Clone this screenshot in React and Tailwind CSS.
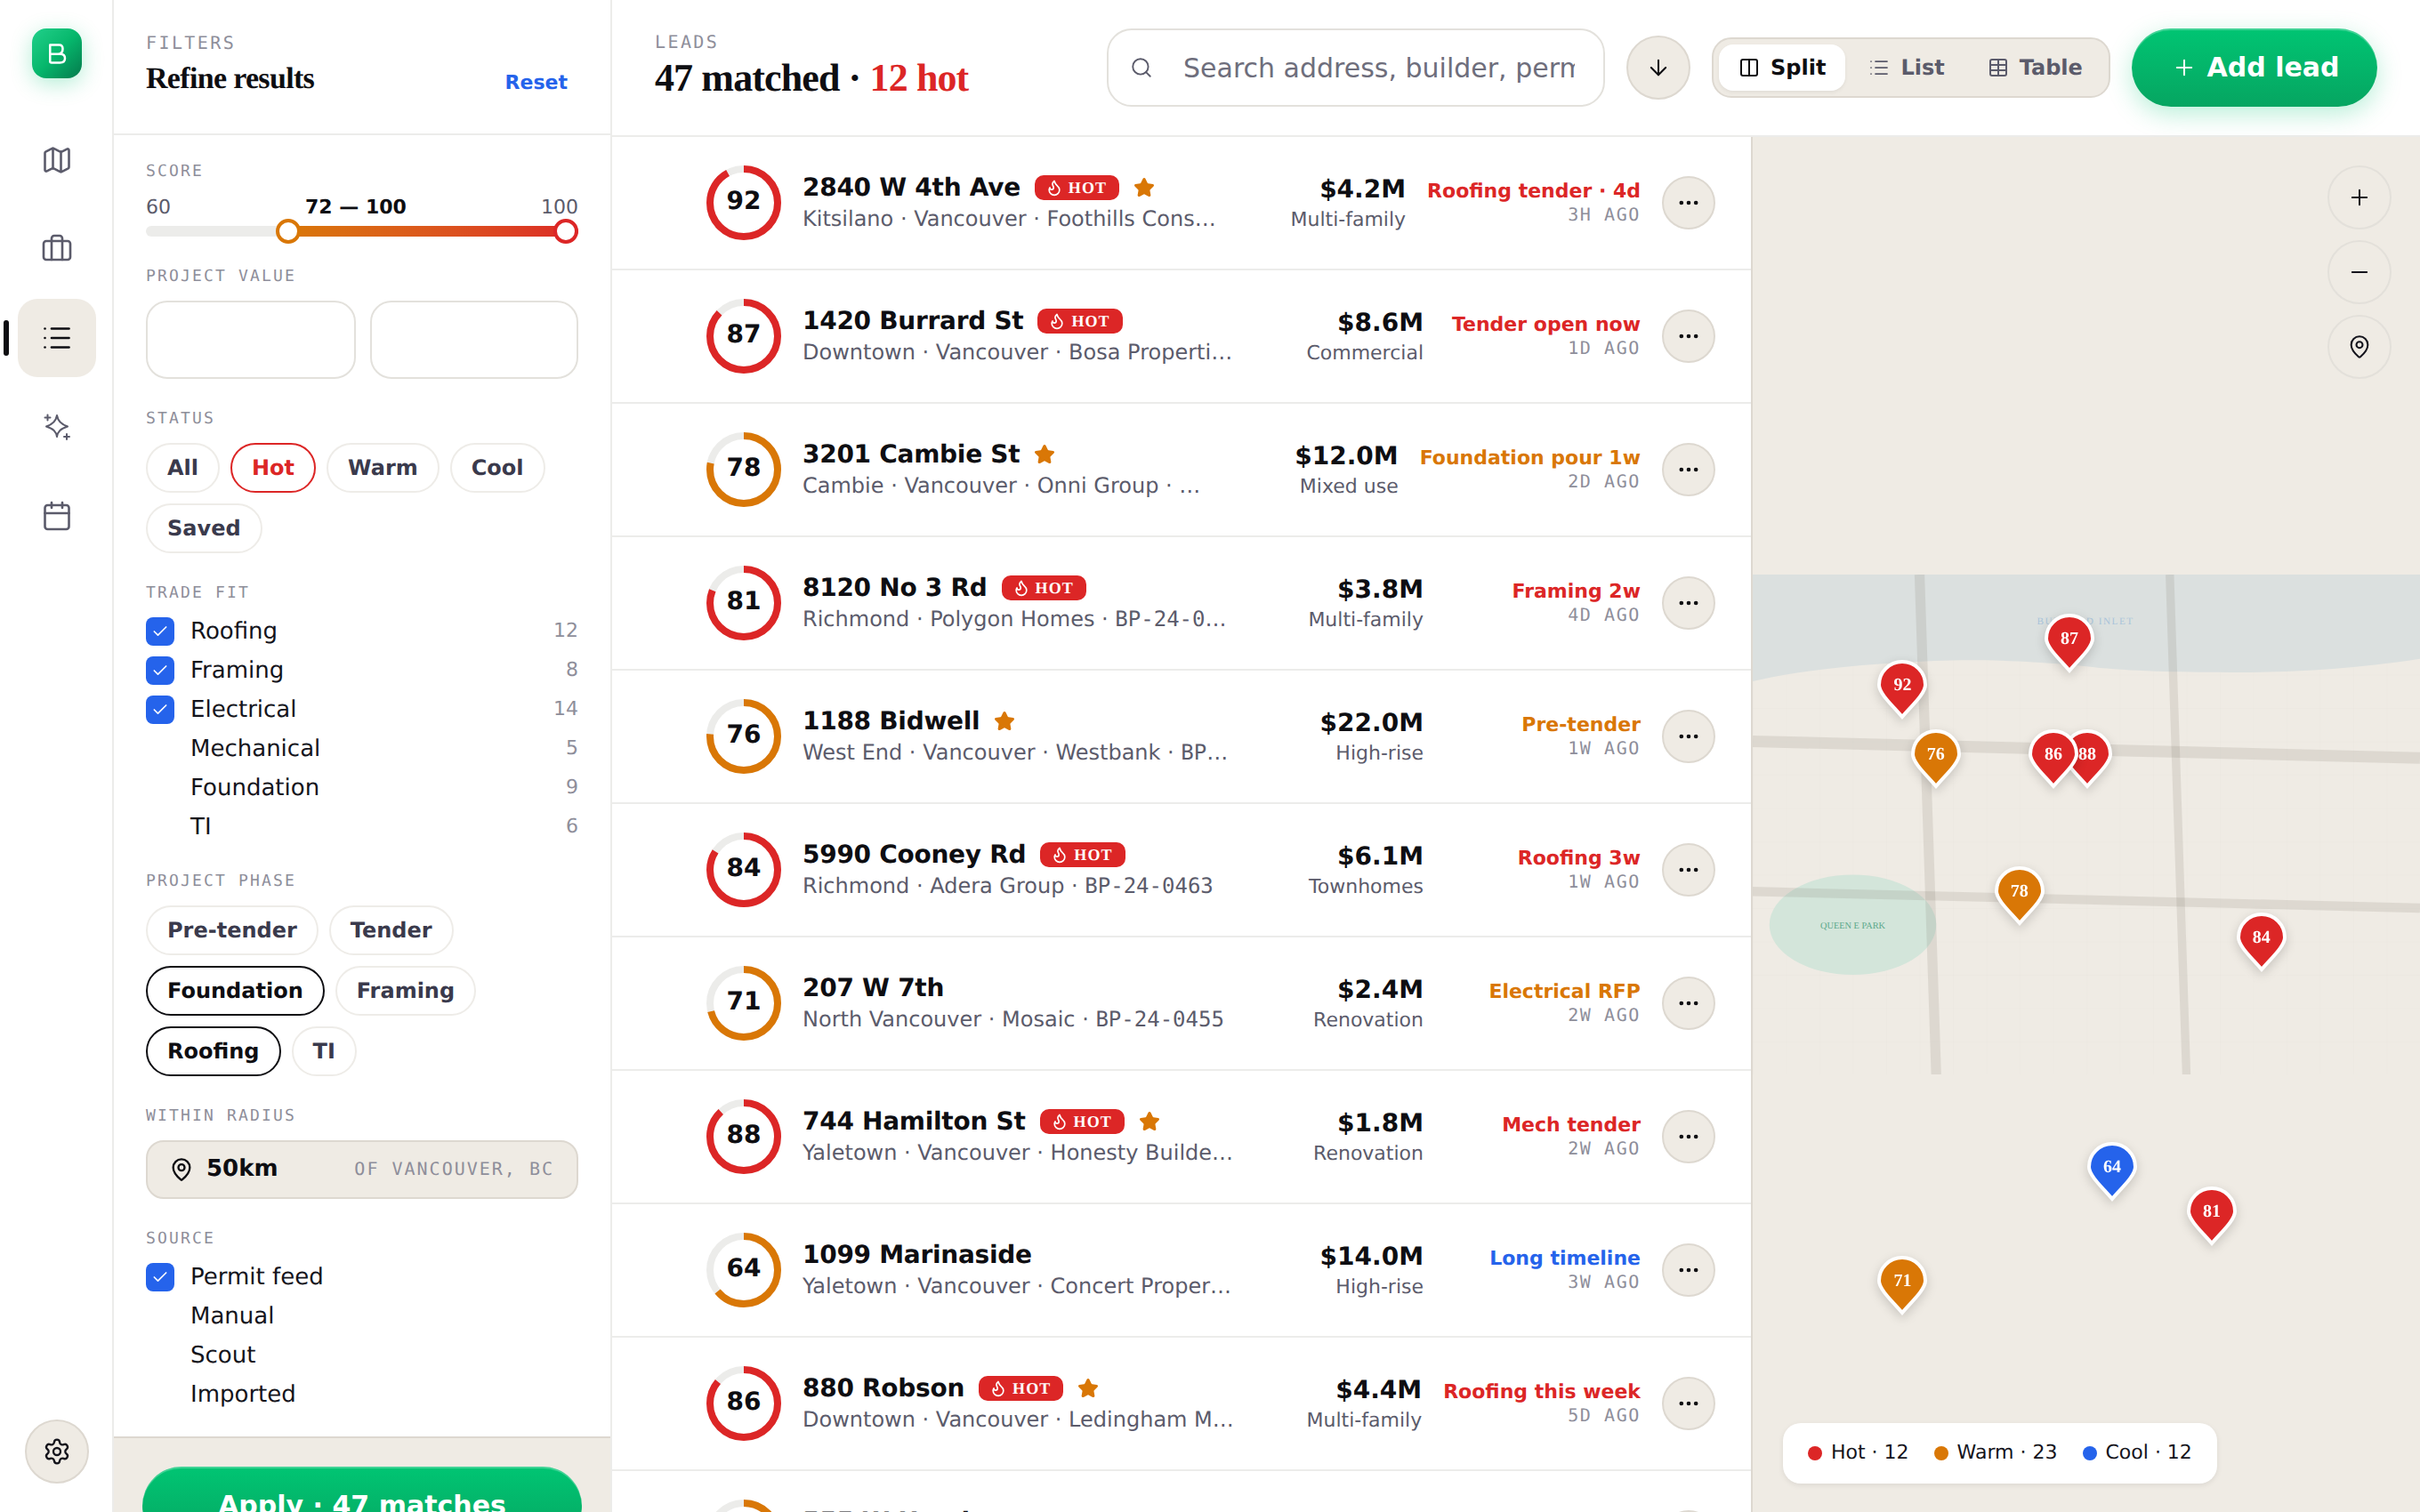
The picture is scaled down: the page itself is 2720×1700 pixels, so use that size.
import React from "react";
import { Map as MapIcon, Briefcase, List, Calendar, Settings, MapPin, Check, Search, ArrowDown, Columns2, Table, Plus, Minus, Ellipsis, Flame, Star } from "lucide-react";

const LABEL = "h-6 pt-[1px] font-['DejaVu_Sans_Mono',monospace] text-[18px] leading-6 tracking-[0.12em] text-[#8e8e9a] uppercase";

const leads = [
  { s: 92, t: "2840 W 4th Ave", hot: true, star: true, sub: "Kitsilano · Vancouver · Foothills Construction · ", bp: "BP-24-0412", p: "$4.2M", k: "Multi-family", sig: "Roofing tender · 4d", c: "text-[#dc2626]", ago: "3H AGO" },
  { s: 87, t: "1420 Burrard St", hot: true, sub: "Downtown · Vancouver · Bosa Properties · ", bp: "BP-24-0398", p: "$8.6M", k: "Commercial", sig: "Tender open now", c: "text-[#dc2626]", ago: "1D AGO" },
  { s: 78, t: "3201 Cambie St", star: true, sub: "Cambie · Vancouver · Onni Group · ", bp: "BP-24-0387", p: "$12.0M", k: "Mixed use", sig: "Foundation pour 1w", c: "text-[#d97706]", ago: "2D AGO" },
  { s: 81, t: "8120 No 3 Rd", hot: true, sub: "Richmond · Polygon Homes · ", bp: "BP-24-0476", p: "$3.8M", k: "Multi-family", sig: "Framing 2w", c: "text-[#dc2626]", ago: "4D AGO" },
  { s: 76, t: "1188 Bidwell", star: true, sub: "West End · Vancouver · Westbank · ", bp: "BP-24-0471", p: "$22.0M", k: "High-rise", sig: "Pre-tender", c: "text-[#d97706]", ago: "1W AGO" },
  { s: 84, t: "5990 Cooney Rd", hot: true, sub: "Richmond · Adera Group · ", bp: "BP-24-0463", p: "$6.1M", k: "Townhomes", sig: "Roofing 3w", c: "text-[#dc2626]", ago: "1W AGO" },
  { s: 71, t: "207 W 7th", sub: "North Vancouver · Mosaic · ", bp: "BP-24-0455", p: "$2.4M", k: "Renovation", sig: "Electrical RFP", c: "text-[#d97706]", ago: "2W AGO" },
  { s: 88, t: "744 Hamilton St", hot: true, star: true, sub: "Yaletown · Vancouver · Honesty Builders · ", bp: "BP-24-0449", p: "$1.8M", k: "Renovation", sig: "Mech tender", c: "text-[#dc2626]", ago: "2W AGO" },
  { s: 64, t: "1099 Marinaside", sub: "Yaletown · Vancouver · Concert Properties · ", bp: "BP-24-0441", p: "$14.0M", k: "High-rise", sig: "Long timeline", c: "text-[#2563eb]", ago: "3W AGO" },
  { s: 86, t: "880 Robson", hot: true, star: true, sub: "Downtown · Vancouver · Ledingham McAllister · ", bp: "BP-24-0436", p: "$4.4M", k: "Multi-family", sig: "Roofing this week", c: "text-[#dc2626]", ago: "5D AGO" },
  { s: 73, t: "555 W Hastings", sub: "Downtown · Vancouver · Westbank · ", bp: "BP-24-0428", p: "$9.2M", k: "Commercial", sig: "Pre-tender", c: "text-[#d97706]", ago: "1M AGO" },
];

const pins = [
  { n: 92, x: 168.4, y: 588, c: "#dc2626" },
  { n: 87, x: 356, y: 536, c: "#dc2626" },
  { n: 78, x: 299.7, y: 820, c: "#d97706" },
  { n: 81, x: 516, y: 1180, c: "#dc2626" },
  { n: 76, x: 205.7, y: 666, c: "#d97706" },
  { n: 84, x: 571.7, y: 872, c: "#dc2626" },
  { n: 71, x: 168.4, y: 1258, c: "#d97706" },
  { n: 88, x: 376, y: 666, c: "#dc2626" },
  { n: 64, x: 404, y: 1130, c: "#2563eb" },
  { n: 86, x: 338, y: 666, c: "#dc2626" },
];

function Label({ children, className = "" }) {
  return <div className={`${LABEL} ${className}`}>{children}</div>;
}

function Chip({ children, tone }) {
  const cls =
    tone === "hot"
      ? "border-[#dc2626] text-[#dc2626]"
      : tone === "on"
      ? "border-[#0e0e12] text-[#0e0e12]"
      : "border-[#eeece8] text-[#3a3a4c]";
  return (
    <span className={`flex h-14 items-center rounded-full border-2 bg-white px-[22px] text-[24px] leading-none font-bold ${cls}`}>
      {children}
    </span>
  );
}

function CheckRow({ on, label, count }) {
  return (
    <div className="flex h-11 items-center">
      <span className={`mr-[18px] flex h-8 w-8 shrink-0 items-center justify-center rounded-lg ${on ? "bg-[#2563eb]" : ""}`}>
        {on && <Check size={20} strokeWidth={2} className="text-white" />}
      </span>
      <span className="flex-1 text-[26px] leading-none text-[#14141c]">{label}</span>
      {count != null && <span className="text-[22px] leading-none text-[#8e8e9a]">{count}</span>}
    </div>
  );
}

function Ring({ score }) {
  const color = score >= 80 ? "#dc2626" : "#d97706";
  const r = 38;
  const c = 2 * Math.PI * r;
  return (
    <div className="relative h-[84px] w-[84px] shrink-0">
      <svg width="84" height="84" viewBox="0 0 84 84" className="-rotate-90">
        <circle cx="42" cy="42" r={r} fill="none" stroke="#ececea" strokeWidth="8" />
        <circle cx="42" cy="42" r={r} fill="none" stroke={color} strokeWidth="8" strokeDasharray={`${(c * score) / 100} ${c}`} />
      </svg>
      <div className="absolute inset-0 flex items-center justify-center pb-1 text-[28px] leading-none font-bold text-[#0e0e12]">{score}</div>
    </div>
  );
}

function Row({ l }) {
  return (
    <div className="flex h-[150px] shrink-0 items-center gap-6 border-b-2 border-[#ececea] pr-10 pl-[106px]">
      <Ring score={l.s} />
      <div className="min-w-0 flex-1 pb-[1px]">
        <div className="flex h-9 items-center gap-4">
          <span className="text-[28px] leading-9 font-bold tracking-[-0.01em] whitespace-nowrap text-[#0e0e12]">{l.t}</span>
          {l.hot && (
            <span className="flex h-7 items-center gap-[6px] rounded-[10px] bg-[#dc2626] pr-[14px] pl-3 font-['Liberation_Serif',serif] text-[18px] leading-none font-bold tracking-[0.06em] text-white">
              <Flame size={20} strokeWidth={2} />
              HOT
            </span>
          )}
          {l.star && <Star size={24} className="fill-[#d97706] text-[#d97706]" />}
        </div>
        <div className="mt-[1px] truncate text-[24px] leading-8 text-[#5b5b6b]">
          {l.sub}
          <span className="font-['DejaVu_Sans_Mono',monospace]">{l.bp}</span>
        </div>
      </div>
      <div className="min-w-[186px] shrink-0 text-right">
        <div className="text-[28px] leading-9 font-bold text-[#0e0e12]">{l.p}</div>
        <div className="mt-[3px] text-[22px] leading-7 text-[#5b5b6b]">{l.k}</div>
      </div>
      <div className="min-w-[220px] shrink-0 pb-[2px] text-right">
        <div className={`text-[22px] leading-7 font-bold ${l.c}`}>{l.sig}</div>
        <div className="mt-[-1px] font-['DejaVu_Sans_Mono',monospace] text-[20px] leading-6 tracking-[0.08em] text-[#8e8e9a]">{l.ago}</div>
      </div>
      <button className="flex h-[60px] w-[60px] shrink-0 items-center justify-center rounded-full border-2 border-[#ddd8d0] bg-[#efebe4] text-[#0e0e12]">
        <Ellipsis size={28} strokeWidth={2} />
      </button>
    </div>
  );
}

function Pin({ p }) {
  return (
    <div className="absolute h-[68px] w-14 drop-shadow-[0_4px_6px_rgba(0,0,0,0.16)]" style={{ left: p.x - 28, top: p.y }}>
      <svg width="56" height="68" viewBox="0 0 56 68">
        <path d="M28 2C42.4 2 54 13.6 54 28C54 38 38 52 28 64C18 52 2 38 2 28C2 13.6 13.6 2 28 2Z" fill={p.c} stroke="#fff" strokeWidth="4" />
      </svg>
      <div className="absolute inset-x-0 top-0 flex h-14 items-center justify-center font-['Liberation_Serif',serif] text-[20px] leading-none font-bold text-white">{p.n}</div>
    </div>
  );
}

function MapRound({ children }) {
  return (
    <button className="flex h-[72px] w-[72px] items-center justify-center rounded-full border-2 border-[#e3e0da] bg-[#efebe4] text-[#14141c]">{children}</button>
  );
}

function SparkIcon() {
  return (
    <svg width="40" height="40" viewBox="0 0 40 40" fill="none" stroke="currentColor" strokeWidth="2" strokeLinecap="round" strokeLinejoin="round">
      <path d="M20 7C21 13 24 17 32 19.5C24 22 21 25 20 31C19 25 16 22 8 19.5C16 17 19 13 20 7Z" />
      <path d="M9.5 6.5V12.5M6.5 9.5H12.5M31 28V34M28 31H34" />
    </svg>
  );
}

function Rail() {
  const items = [MapIcon, Briefcase, List, SparkIcon, Calendar];
  return (
    <aside className="flex h-full w-32 shrink-0 flex-col items-center border-r-2 border-[#ececea] bg-white pl-[2px]">
      <div className="mt-8 mb-12 flex h-14 w-14 items-center justify-center rounded-[16px] bg-gradient-to-br from-[#1fd08a] via-[#06b76c] to-[#047a4c] shadow-[0_6px_24px_rgba(0,197,115,0.3)]">
        <svg width="24" height="28" viewBox="0 0 24 28" fill="none" stroke="#fff" strokeWidth="2.5" strokeLinecap="round" strokeLinejoin="round">
          <path d="M13 14.7H4.25M4.25 4.5H14.5Q18.5 4.5 18.5 9Q18.5 14.7 13 14.7H16Q21 14.7 21 19.5Q21 24.5 15.5 24.5H6Q4.25 24.5 4.25 23V4.5" />
        </svg>
      </div>
      <div className="flex flex-col gap-3">
        {items.map((I, i) => (
          <div key={i} className={`relative flex h-[88px] w-[88px] items-center justify-center rounded-[22px] ${i === 2 ? "bg-[#efebe4] text-[#0e0e12]" : "text-[#5b5b6b]"}`}>
            {i === 2 && <span className="absolute top-6 left-[-16px] h-10 w-[6px] rounded-full bg-[#0e0e12]" />}
            <I size={36} strokeWidth={1.75} />
          </div>
        ))}
      </div>
      <button className="mt-auto mb-8 flex h-[72px] w-[72px] items-center justify-center rounded-full border-2 border-[#ddd8d0] bg-[#efebe4] text-[#14141c]">
        <Settings size={32} strokeWidth={1.75} />
      </button>
    </aside>
  );
}

function Filters() {
  return (
    <aside className="h-full w-[560px] shrink-0 overflow-hidden border-r-2 border-[#ececea] bg-white">
      <div className="flex h-[152px] items-end justify-between border-b-2 border-[#ececea] pr-[48px] pb-[39px] pl-9">
        <div>
          <div className="mb-[7px] font-['DejaVu_Sans_Mono',monospace] text-[20px] leading-6 tracking-[0.12em] text-[#8e8e9a]">FILTERS</div>
          <div className="font-['Liberation_Serif',serif] text-[34px] leading-[44px] font-bold tracking-[-0.02em] text-[#0e0e12]">Refine results</div>
        </div>
        <span className="mb-[3px] text-[22px] leading-7 font-bold text-[#2563eb]">Reset</span>
      </div>
      <div className="flex flex-col gap-8 px-9 pt-7 pb-[31px]">
        <section>
          <Label className="mb-[16px]">Score</Label>
          <div className="flex h-7 items-center justify-between text-[22px] leading-7 text-[#5b5b6b]">
            <span>60</span>
            <span className="font-bold text-[#0e0e12]">72 — 100</span>
            <span>100</span>
          </div>
          <div className="relative mt-[6px] h-3 rounded-full bg-[#ececea]">
            <div className="absolute inset-y-0 right-0 left-[160px] rounded-full bg-gradient-to-r from-[#d97706] to-[#dc2626]" />
            <span className="absolute top-[-8px] left-[146px] h-7 w-7 rounded-full border-4 border-[#d97706] bg-white" />
            <span className="absolute top-[-8px] right-0 h-7 w-7 rounded-full border-4 border-[#dc2626] bg-white" />
          </div>
        </section>
        <section>
          <Label className="mb-4">Project value</Label>
          <div className="flex gap-4">
            <div className="h-[88px] w-[236px] shrink-0 rounded-[24px] border-2 border-[#e3e1dc]" />
            <div className="h-[88px] flex-1 rounded-[24px] border-2 border-[#e3e1dc]" />
          </div>
        </section>
        <section>
          <Label className="mb-4">Status</Label>
          <div className="flex flex-wrap gap-3">
            <Chip>All</Chip>
            <Chip tone="hot">Hot</Chip>
            <Chip>Warm</Chip>
            <Chip>Cool</Chip>
            <Chip>Saved</Chip>
          </div>
        </section>
        <section>
          <Label className="mb-4">Trade fit</Label>
          <div className="my-[-6px]">
            <CheckRow on label="Roofing" count={12} />
            <CheckRow on label="Framing" count={8} />
            <CheckRow on label="Electrical" count={14} />
            <CheckRow label="Mechanical" count={5} />
            <CheckRow label="Foundation" count={9} />
            <CheckRow label="TI" count={6} />
          </div>
        </section>
        <section>
          <Label className="mb-4">Project phase</Label>
          <div className="flex flex-wrap gap-3">
            <Chip>Pre-tender</Chip>
            <Chip>Tender</Chip>
            <Chip tone="on">Foundation</Chip>
            <Chip>Framing</Chip>
            <Chip tone="on">Roofing</Chip>
            <Chip>TI</Chip>
          </div>
        </section>
        <section>
          <Label className="mb-4">Within radius</Label>
          <div className="flex h-[66px] items-center rounded-[20px] border-2 border-[#ddd8d0] bg-[#efebe4] pr-[25px] pl-6">
            <MapPin size={28} strokeWidth={2} className="mr-[14px] text-[#0e0e12]" />
            <span className="pb-[2px] text-[26px] leading-none font-bold text-[#0e0e12]">50km</span>
            <span className="ml-auto pb-[2px] font-['DejaVu_Sans_Mono',monospace] text-[20px] leading-none tracking-[0.1em] text-[#8e8e9a]">OF VANCOUVER, BC</span>
          </div>
        </section>
        <section>
          <Label className="mb-4">Source</Label>
          <div className="my-[-6px]">
            <CheckRow on label="Permit feed" />
            <CheckRow label="Manual" />
            <CheckRow label="Scout" />
            <CheckRow label="Imported" />
          </div>
        </section>
      </div>
      <div className="border-t-2 border-[#ddd8d0] bg-[#efebe4] px-8 pt-[32px] pb-8">
        <button className="flex h-[88px] w-full items-center justify-center rounded-full bg-gradient-to-b from-[#00c573] to-[#06a561] text-[30px] leading-none font-bold text-white shadow-[inset_0_2px_0_rgba(255,255,255,0.25)]">
          Apply · 47 matches
        </button>
      </div>
    </aside>
  );
}

function Header() {
  return (
    <header className="flex h-[154px] shrink-0 items-center gap-6 border-b-2 border-[#ececea] bg-white px-12">
      <div className="min-w-0 flex-1 pb-[3px]">
        <div className="font-['DejaVu_Sans_Mono',monospace] text-[20px] leading-6 tracking-[0.12em] text-[#8e8e9a]">LEADS</div>
        <div className="mt-[3px] font-['Liberation_Serif',serif] text-[44px] leading-[52px] font-bold tracking-[-0.02em] whitespace-nowrap text-[#0e0e12]">
          47 matched · <span className="text-[#dc2626]">12 hot</span>
        </div>
      </div>
      <div className="flex h-[88px] w-[560px] shrink-0 items-center gap-[34px] rounded-[28px] border-2 border-[#e3e1dc] bg-white pr-8 pl-6">
        <Search size={26} strokeWidth={1.75} className="shrink-0 text-[#5b5b6b]" />
        <input
          className="min-w-0 flex-1 bg-transparent text-[30px] leading-none text-[#0e0e12] outline-none placeholder:text-[#6e6e7c]"
          placeholder="Search address, builder, permit…"
        />
      </div>
      <button className="flex h-[72px] w-[72px] shrink-0 items-center justify-center rounded-full border-2 border-[#ddd8d0] bg-[#efebe4] text-[#0e0e12]">
        <ArrowDown size={28} strokeWidth={1.75} />
      </button>
      <div className="flex h-[68px] w-[448px] shrink-0 items-center gap-1 rounded-[22px] border-2 border-[#ddd8d0] bg-[#efebe4] px-[6px]">
        <span className="flex h-[52px] items-center gap-3 rounded-[16px] bg-white px-[22px] text-[24px] leading-none font-bold text-[#0e0e12] shadow-[0_2px_4px_rgba(0,0,0,0.06)]">
          <Columns2 size={24} strokeWidth={2} />
          Split
        </span>
        <span className="flex h-[52px] items-center gap-3 px-[22px] text-[24px] leading-none font-bold text-[#5b5b6b]">
          <List size={24} strokeWidth={1.75} />
          List
        </span>
        <span className="flex h-[52px] items-center gap-3 px-[22px] text-[24px] leading-none font-bold text-[#5b5b6b]">
          <Table size={24} strokeWidth={2} />
          Table
        </span>
      </div>
      <button className="flex h-[88px] w-[276px] shrink-0 items-center justify-center gap-3 rounded-full bg-gradient-to-b from-[#00c573] to-[#06a561] pl-[2px] text-[30px] leading-none font-bold text-white shadow-[inset_0_2px_0_rgba(255,255,255,0.25),0_8px_28px_rgba(0,197,115,0.28)]">
        <Plus size={28} strokeWidth={1.75} />
        Add lead
      </button>
    </header>
  );
}

function MapPane() {
  return (
    <div className="relative flex min-w-0 flex-1 items-center overflow-hidden border-l-2 border-[#ddd8d0] bg-[#efebe4]">
      <svg viewBox="0 0 800 600" className="block w-full" preserveAspectRatio="xMidYMid meet">
        <defs>
          <pattern id="grid" width="40" height="40" patternUnits="userSpaceOnUse">
            <path d="M40 0H0V40" fill="none" stroke="#000" strokeOpacity="0.02" strokeWidth="1" />
          </pattern>
        </defs>
        <rect width="800" height="600" fill="url(#grid)" />
        <path d="M0 0H800V101C700 116 620 118 558 117C500 117 440 115 400 110C340 104 280 102 240 103C160 105 70 112 0 128Z" fill="#dbe0df" />
        <ellipse cx="120" cy="420" rx="100" ry="60" fill="#d3e5da" />
        <g stroke="#6f675a" strokeOpacity="0.14" fill="none">
          <path d="M0 200L800 220" strokeWidth="14" />
          <path d="M0 380L800 400" strokeWidth="11" />
          <path d="M200 0L220 600" strokeWidth="12" />
          <path d="M500 0L520 600" strokeWidth="10" />
        </g>
        <text x="120" y="425" textAnchor="middle" fontFamily="'Liberation Serif',serif" fontSize="11" fill="#5ba88a">QUEEN E PARK</text>
        <text x="399" y="60" textAnchor="middle" fontFamily="'Liberation Serif',serif" fontSize="12" letterSpacing="1.6" fill="#a9c4da">BURRARD INLET</text>
      </svg>
      {pins.map((p) => (
        <Pin key={p.n} p={p} />
      ))}
      <div className="absolute top-8 right-8 flex flex-col gap-3">
        <MapRound><Plus size={28} strokeWidth={1.75} /></MapRound>
        <MapRound><Minus size={28} strokeWidth={1.75} /></MapRound>
        <MapRound><MapPin size={28} strokeWidth={1.75} /></MapRound>
      </div>
      <div className="absolute bottom-8 left-[34px] flex h-[68px] items-center gap-[28px] rounded-[20px] bg-white px-7 text-[22px] leading-none text-[#14141c] shadow-[0_2px_6px_rgba(0,0,0,0.08)]">
        <span className="flex items-center gap-[10px]"><i className="h-4 w-4 rounded-full bg-[#dc2626]" />Hot · 12</span>
        <span className="flex items-center gap-[10px]"><i className="h-4 w-4 rounded-full bg-[#d97706]" />Warm · 23</span>
        <span className="flex items-center gap-[10px]"><i className="h-4 w-4 rounded-full bg-[#2563eb]" />Cool · 12</span>
      </div>
    </div>
  );
}

export default function App() {
  return (
    <div className="flex h-screen w-full overflow-hidden bg-white font-['DejaVu_Sans',sans-serif] [text-rendering:geometricPrecision]">
      <Rail />
      <Filters />
      <main className="flex h-full min-w-0 flex-1 flex-col">
        <Header />
        <div className="flex min-h-0 flex-1">
          <div className="flex w-[1280px] shrink-0 flex-col overflow-hidden bg-white">
            {leads.map((l) => (
              <Row key={l.t} l={l} />
            ))}
          </div>
          <MapPane />
        </div>
      </main>
    </div>
  );
}
